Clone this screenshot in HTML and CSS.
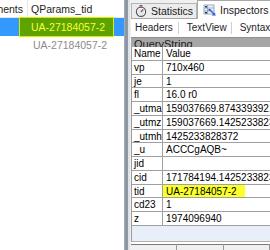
FILE: index.html
```html
<!DOCTYPE html>
<html lang="en">
<head>
  <meta charset="UTF-8">
  <title>Fiddler - QueryString</title>
  <link rel="stylesheet" href="styles.css">
</head>
<body>
  <div class="app">
    <div class="sessions">
      <div class="list-head">
        <div class="col col-comments"><span>Comments</span></div>
        <div class="col col-tid">QParams_tid</div>
      </div>
      <div class="list-row selected">
        <div class="col col-comments"></div>
        <div class="col col-tid"><span class="mark">UA-27184057-2</span></div>
      </div>
      <div class="list-row dim">
        <div class="col col-comments"></div>
        <div class="col col-tid">UA-27184057-2</div>
      </div>
    </div>

    <div class="splitter"></div>

    <div class="inspector">
      <div class="tabs">
        <div class="tab">
          <svg width="12" height="12" viewBox="0 0 12 12">
            <rect x="4.5" y="0" width="3" height="1.5" fill="#666"/>
            <circle cx="6" cy="6.8" r="4.6" fill="#fff" stroke="#555" stroke-width="1.2"/>
            <circle cx="6" cy="6.8" r="3.2" fill="#dde8f4"/>
            <line x1="6" y1="6.8" x2="8.2" y2="4.4" stroke="#d02020" stroke-width="1.2"/>
          </svg>
          Statistics
        </div>
        <div class="tab active">
          <svg width="13" height="12" viewBox="0 0 13 12">
            <rect x="1" y="1" width="10" height="9" fill="#eef2f8" stroke="#8a9ab0" stroke-width="0.8"/>
            <line x1="1" y1="4" x2="11" y2="4" stroke="#8a9ab0" stroke-width="0.8"/>
            <line x1="1" y1="7" x2="11" y2="7" stroke="#8a9ab0" stroke-width="0.8"/>
            <line x1="4.5" y1="1" x2="4.5" y2="10" stroke="#8a9ab0" stroke-width="0.8"/>
            <rect x="2" y="2" width="2" height="1.5" fill="#1a3f9a"/>
            <rect x="5.5" y="5" width="2" height="1.5" fill="#1a3f9a"/>
            <rect x="2" y="8" width="2" height="1.5" fill="#333"/>
            <path d="M7 6 L12 11 L10 11 L12 9" fill="none" stroke="#2a62d8" stroke-width="1.2"/>
          </svg>
          Inspectors
        </div>
        <div class="tab tab-cut">
          <svg width="12" height="12" viewBox="0 0 12 12">
            <path d="M7 1 L3 7 L6 7 L4 11 L10 4 L7 4 Z" fill="#888"/>
          </svg>
        </div>
      </div>

      <div class="subtabs">
        <span>Headers</span>
        <span>TextView</span>
        <span>SyntaxView</span>
      </div>

      <div class="section-title">QueryString</div>

      <div class="grid">
        <div class="cell head">Name</div><div class="cell head">Value</div>
        <div class="cell">vp</div><div class="cell">710x460</div>
        <div class="cell">je</div><div class="cell">1</div>
        <div class="cell">fl</div><div class="cell">16.0 r0</div>
        <div class="cell">_utma</div><div class="cell">159037669.874339392.1425233823</div>
        <div class="cell">_utmz</div><div class="cell">159037669.1425233823.1.1</div>
        <div class="cell">_utmht</div><div class="cell">1425233828372</div>
        <div class="cell">_u</div><div class="cell">ACCCgAQB~</div>
        <div class="cell">jid</div><div class="cell"></div>
        <div class="cell">cid</div><div class="cell">171784194.1425233823</div>
        <div class="cell">tid</div><div class="cell"><span class="hl">UA-27184057-2</span></div>
        <div class="cell">cd23</div><div class="cell">1</div>
        <div class="cell">z</div><div class="cell">1974096940</div>
      </div>

      <div class="grid-fill"></div>

      <div class="bottom-tabs">
        <span></span><span></span><span></span>
      </div>
    </div>
  </div>
</body>
</html>
```

FILE: styles.css
```css
body {
  margin: 0;
  padding: 0;
  font-family: "Liberation Sans", Arial, sans-serif;
  font-size: 10px;
  color: #000;
  background-color: #fff;
}

.app {
  display: flex;
  width: 270px;
  height: 250px;
  overflow: hidden;
}

/* session list on the left */
.sessions {
  width: 124px;
  flex-shrink: 0;
  background-color: #fff;
  overflow: hidden;
}

.list-head,
.list-row {
  display: flex;
  height: 18px;
  align-items: center;
  white-space: nowrap;
}

.list-head {
  border-bottom: 1px solid #e5e5e5;
  box-sizing: border-box;
  font-size: 10.5px;
  color: #1e1e1e;
}

.col-comments {
  width: 28px;
  flex-shrink: 0;
  display: flex;
  justify-content: flex-end;
  overflow: hidden;
  height: 100%;
  align-items: center;
  border-right: 1px solid #e5e5e5;
  box-sizing: border-box;
  padding-right: 4px;
}

.col-comments span {
  flex-shrink: 0;
}

.col-tid {
  padding-left: 3px;
}

.list-row.selected {
  background-color: #3399ff;
}

.list-row.selected .col-comments,
.list-row.dim .col-comments {
  border-right: none;
}

.mark {
  background-color: #5ea300;
  color: #f4ff3c;
  padding: 3px 8px 3px 11px;
  margin-left: -11px;
  box-shadow: 0 0 0 1px #d8f000;
  font-size: 10.5px;
}

.list-row.dim {
  color: #8c8c8c;
  font-size: 10.5px;
}

.list-row.dim .col-tid {
  padding-left: 5px;
}

/* splitter */
.splitter {
  width: 6px;
  flex-shrink: 0;
  background: linear-gradient(to right, #a8a8a8 0, #a8a8a8 1px, #8c97a8 1px, #8c97a8 4px, #dfe3e8 4px);
}

/* inspector pane */
.inspector {
  flex: 1;
  display: flex;
  flex-direction: column;
  background-color: #f0f0f0;
  padding-left: 1px;
  overflow: hidden;
}

.tabs {
  display: flex;
  align-items: flex-end;
  height: 19px;
  flex-shrink: 0;
  border-bottom: 1px solid #a9a9a9;
  box-sizing: border-box;
  white-space: nowrap;
  font-size: 10.5px;
  color: #1a1a1a;
}

.tab {
  display: flex;
  align-items: center;
  gap: 4px;
  height: 15px;
  padding: 0 3px 0 3px;
  background-color: #ececec;
  border: 1px solid #b5b5b5;
  border-bottom: none;
  box-sizing: border-box;
}

.tab.active {
  height: 19px;
  margin-bottom: -1px;
  background-color: #fff;
  padding: 0 4px 0 5px;
  border-color: #a9a9a9;
  color: #1a1a1a;
}

.tab-cut {
  margin-left: 2px;
  padding-left: 3px;
}

.subtabs {
  display: flex;
  align-items: center;
  height: 18px;
  flex-shrink: 0;
  background-color: #fff;
  white-space: nowrap;
  font-size: 10px;
  color: #1e1e1e;
  padding-left: 4px;
}

.subtabs span {
  padding-right: 5px;
  border-right: 1px solid #cfcfcf;
  line-height: 12px;
  margin-right: 8px;
}

.subtabs span:nth-child(2) {
  padding-right: 4px;
}

.section-title {
  height: 10px;
  flex-shrink: 0;
  background-color: #a6a6a6;
  border-top: 1px solid #8f8f8f;
  box-sizing: border-box;
  overflow: hidden;
  padding-left: 3px;
  line-height: 13px;
  font-size: 11px;
  color: #202020;
}

.grid {
  display: grid;
  grid-template-columns: 31px 1fr;
  grid-auto-rows: 13.75px;
  flex-shrink: 0;
  background-color: #fff;
  border-left: 1px solid #9c9c9c;
}

.cell {
  border-right: 1px solid #a0a0a0;
  border-bottom: 1px solid #a0a0a0;
  box-sizing: border-box;
  padding-left: 2px;
  white-space: nowrap;
  overflow: hidden;
  line-height: 13px;
}

.cell:nth-child(2n) {
  border-right: none;
  padding-left: 3px;
}

.cell.head {
  background-color: #fff;
}

.hl {
  background-color: #fbff2a;
  padding: 1px 8px 1px 3px;
  margin-left: -3px;
}

.grid-fill {
  height: 15px;
  flex-shrink: 0;
  background-color: #e8eff8;
  border-left: 1px solid #9c9c9c;
  border-bottom: 1px solid #b0b0b0;
}

.bottom-tabs {
  flex: 1;
  display: flex;
  border-top: 2px solid #fff;
  background-color: #f0f0f0;
  box-shadow: inset 0 1px 0 #7a7a7a;
}

.bottom-tabs span {
  width: 52px;
  border-right: 1px solid #9a9a9a;
}
```
